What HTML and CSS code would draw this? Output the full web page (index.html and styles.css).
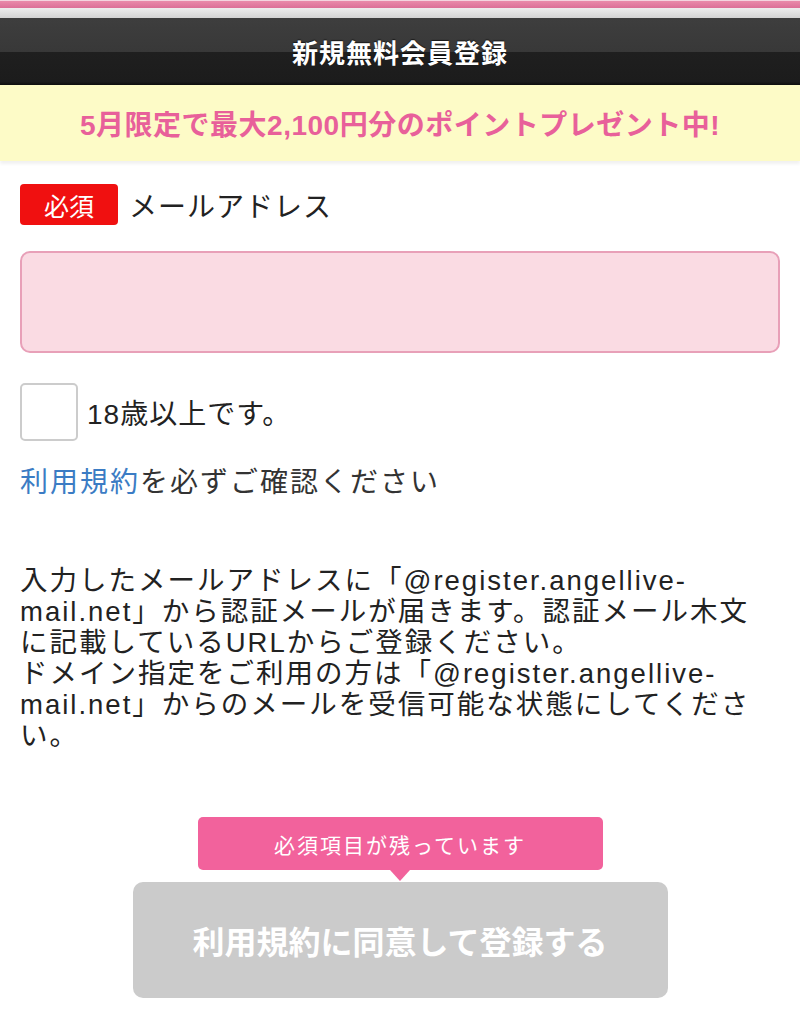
FILE: index.html
```html
<!DOCTYPE html>
<html lang="ja">
<head>
<meta charset="utf-8">
<title>新規無料会員登録</title>
<link rel="stylesheet" href="styles.css">
</head>
<body>
<div class="page">
  <div class="topline"></div>
  <div class="topgap"></div>
  <header class="header"><h1 class="title">新規無料会員登録</h1></header>
  <div class="banner">5月限定で最大2,100円分のポイントプレゼント中!</div>
  <main class="content">
    <div class="field-label"><span class="badge">必須</span><span class="label-text">メールアドレス</span></div>
    <div class="input"></div>
    <label class="check-row"><span class="checkbox"></span><span class="check-text">18歳以上です。</span></label>
    <p class="terms"><a class="link">利用規約</a>を必ずご確認ください</p>
    <p class="note">入力したメールアドレスに「@register.angellive-<br>mail.net」から認証メールが届きます。認証メール木文<br>に記載しているURLからご登録ください。<br>ドメイン指定をご利用の方は「@register.angellive-<br>mail.net」からのメールを受信可能な状態にしてくださ<br>い。</p>
    <div class="submit-area">
      <div class="tooltip">必須項目が残っています</div>
      <div class="button">利用規約に同意して登録する</div>
    </div>
  </main>
</div>
</body>
</html>
```

FILE: styles.css
```css
* { box-sizing: border-box; }
html, body { margin: 0; padding: 0; background: #ffffff; }
body {
  font-family: "Liberation Sans", "Noto Sans CJK JP", sans-serif;
  color: #222222;
}
.page { width: 800px; }
.topline {
  height: 8px;
  border-top: 1px solid #f4d4df;
  background: linear-gradient(#e98aaa, #dc6f97);
}
.topgap {
  height: 10px;
  background: linear-gradient(#eeeeee, #d4d4d4);
}
.header {
  height: 67px;
  background: linear-gradient(#3e3e3e 0%, #383838 50%, #1f1f1f 51%, #1c1c1c 95%, #0e0e0e 100%);
  display: flex;
  align-items: center;
  justify-content: center;
}
.title {
  margin: 0;
  color: #ffffff;
  font-size: 26px;
  font-weight: 700;
  letter-spacing: 1px;
  text-shadow: 0 -1px 1px rgba(0,0,0,0.6);
}
.banner {
  height: 76px;
  background: #fdfbc7;
  color: #e8609a;
  font-size: 28px;
  font-weight: 700;
  letter-spacing: 0.5px;
  display: flex;
  align-items: center;
  justify-content: center;
  box-shadow: 0 3px 3px rgba(0,0,0,0.06);
}
.content { padding: 23px 20px 0; }
.field-label { display: flex; align-items: center; gap: 11px; }
.badge {
  width: 98px;
  height: 41px;
  background: #f01010;
  color: #fff;
  border-radius: 4px;
  font-size: 25px;
  display: flex;
  align-items: center;
  justify-content: center;
}
.label-text { font-size: 28px; letter-spacing: 1px; color: #222; }
.input {
  margin-top: 26px;
  height: 102px;
  background: #fadbe3;
  border: 2px solid #e8a0b8;
  border-radius: 10px;
}
.check-row { margin-top: 30px; display: flex; align-items: center; gap: 9px; }
.checkbox {
  width: 58px;
  height: 58px;
  border: 2px solid #cccccc;
  border-radius: 5px;
  background: #fff;
}
.check-text { font-size: 28px; letter-spacing: 1px; color: #222; }
.terms {
  margin: 22px 0 0;
  font-size: 28px;
  line-height: 40px;
  letter-spacing: 2px;
  color: #333;
}
.link { color: #3b7cc4; }
.note {
  margin: 62px 0 0;
  font-size: 27.5px;
  line-height: 31px;
  letter-spacing: 2px;
  color: #222;
}
.submit-area {
  margin-top: 66px;
  display: flex;
  flex-direction: column;
  align-items: center;
}
.tooltip {
  position: relative;
  width: 405px;
  height: 53px;
  background: #f2629c;
  color: #fff;
  border-radius: 5px;
  font-size: 21px;
  letter-spacing: 2px;
  display: flex;
  align-items: center;
  justify-content: center;
}
.tooltip::after {
  content: "";
  position: absolute;
  left: 50%;
  top: 100%;
  margin-left: -10px;
  border-left: 10px solid transparent;
  border-right: 10px solid transparent;
  border-top: 11px solid #f2629c;
}
.button {
  margin-top: 12px;
  width: 535px;
  height: 116px;
  background: #cbcbcb;
  border-radius: 10px;
  color: #ffffff;
  font-size: 32px;
  font-weight: 700;
  display: flex;
  align-items: center;
  justify-content: center;
}
```
